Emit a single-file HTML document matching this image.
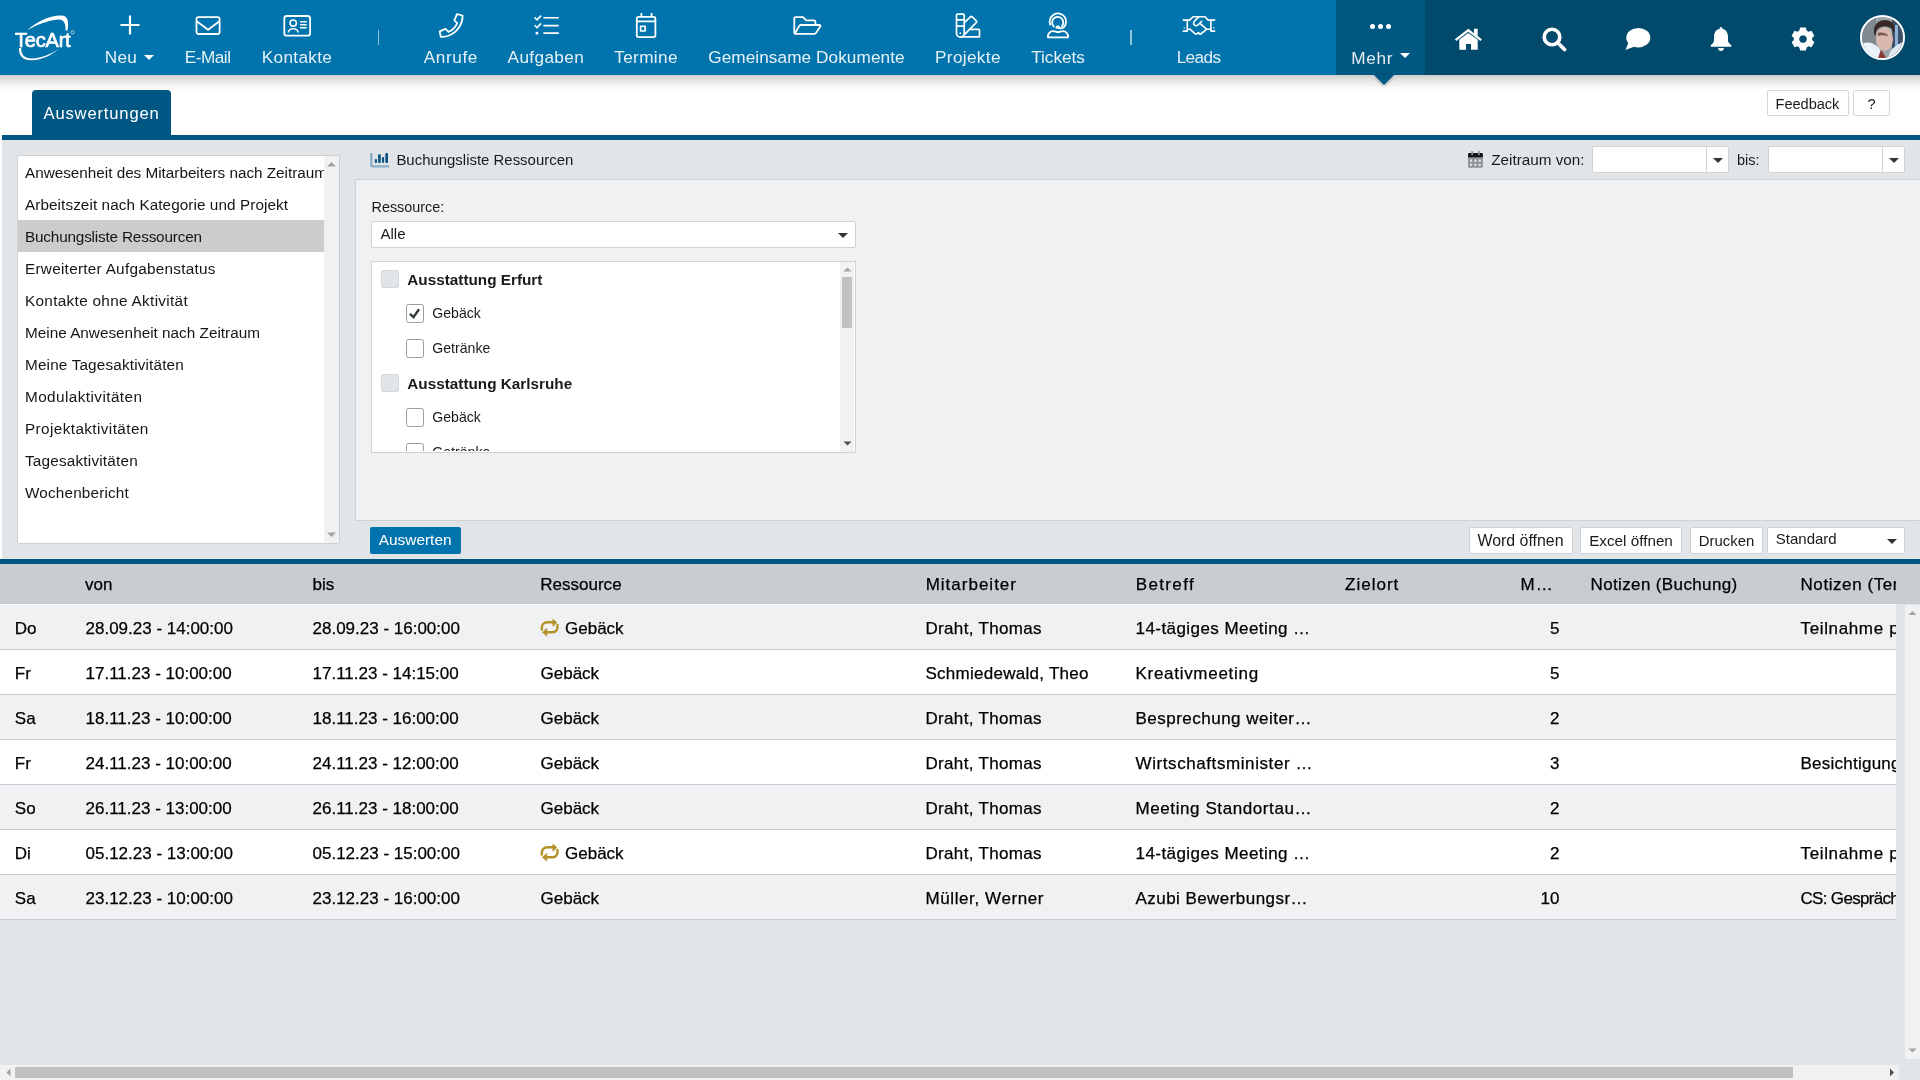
<!DOCTYPE html>
<html><head><meta charset="utf-8"><title>TecArt Auswertungen</title>
<style>
html,body{margin:0;padding:0}
body{width:1920px;height:1080px;overflow:hidden;position:relative;background:#fff;font-family:"Liberation Sans",sans-serif}
.a{position:absolute;box-sizing:border-box}
.t{position:absolute;white-space:nowrap;line-height:1.1172}
.k{-webkit-text-stroke:0.25px currentColor}
body{-webkit-font-smoothing:antialiased}
#root{position:absolute;left:0;top:0;width:1920px;height:1080px;will-change:transform}
.nl{color:#fff;line-height:1.1172;white-space:nowrap}
svg{display:block}
</style></head><body><div id="root">
<div class="a" style="left:0px;top:0px;width:1920px;height:75px;background:#0274ad"></div>
<div class="a" style="left:1336px;top:0px;width:89px;height:75px;background:#015883"></div>
<div class="a" style="left:1425px;top:0px;width:495px;height:75px;background:#024a6b"></div>
<div class="a" style="left:0px;top:75px;width:1920px;height:16px;background:linear-gradient(rgba(0,0,0,0.19),rgba(0,0,0,0.085) 40%,rgba(0,0,0,0.02) 80%,rgba(0,0,0,0))"></div>
<svg class="a" style="left:1364px;top:75px;filter:drop-shadow(0 1px 2px rgba(0,0,0,0.3))" width="40" height="20"><polygon points="10,0 30,0 20,10" fill="#015883"/></svg>
<svg class="a" style="left:10px;top:10px" width="70" height="55" viewBox="0 0 70 55">
<path d="M17 20.5 C 26 12, 40 5, 52 5.6 C 58 6, 59 12, 57.5 20.5 L 55.5 20.5 C 56 14, 54 9, 48 9.5 C 38 10.5, 26 15, 17 20.5 Z" fill="#fff"/>
<path d="M9 38 L 11.2 38 C 11 45, 15 48.5, 22 48.5 C 32 48, 42 44, 50 38 C 42 45, 32 50, 22 50.3 C 13 50.5, 8.5 46, 9 38 Z" fill="#fff"/>
<text x="5" y="36.8" font-family="Liberation Sans" font-weight="400" font-size="20" fill="#fff" stroke="#fff" stroke-width="0.7" letter-spacing="-0.2">TecArt</text>
<circle cx="62.6" cy="22.3" r="1.6" fill="none" stroke="#fff" stroke-width="0.6"/>
</svg>
<div class="a" style="left:109.6px;top:5px;width:40px;height:40px"><svg width="40" height="40" viewBox="0 0 40 40"><path d="M20 10.5V29.5M10.5 20H29.5" stroke="#fff" stroke-width="2.2" fill="none"/></svg></div>
<span class="t " style="left:104.8px;top:48.43px;font-size:17.2px;color:rgba(255,255,255,0.9);font-weight:400;letter-spacing:0.284px;">Neu</span>
<div class="a" style="left:144px;top:55px;width:0px;height:0px;border-left:5px solid transparent;border-right:5px solid transparent;border-top:5px solid #fff"></div>
<div class="a" style="left:188.2px;top:5px;width:40px;height:40px"><svg width="40" height="40" viewBox="0 0 40 40"><rect x="8.5" y="12.1" width="23.1" height="16.9" rx="2" stroke="#fff" stroke-width="1.8" fill="none"/><path d="M8.7 16.2 L20.1 24.8 L31.4 16.2" stroke="#fff" stroke-width="1.8" fill="none" stroke-linejoin="round"/></svg></div>
<span class="t " style="left:184.7px;top:48.43px;font-size:17.2px;color:rgba(255,255,255,0.9);font-weight:400;letter-spacing:-0.481px;">E-Mail</span>
<div class="a" style="left:277.1px;top:5px;width:40px;height:40px"><svg width="40" height="40" viewBox="0 0 40 40"><rect x="7.3" y="11" width="25.8" height="19.7" rx="2.5" stroke="#fff" stroke-width="1.8" fill="none"/><circle cx="16.2" cy="18.1" r="3.2" stroke="#fff" stroke-width="1.5" fill="none"/><path d="M11.3 27.6 C 11.3 25.3, 13.5 23.8, 16.2 23.8 C 18.9 23.8, 21.1 25.3, 21.1 27.6" stroke="#fff" stroke-width="1.6" fill="none"/><path d="M23.1 16.8H29.7M23.1 19.8H29.7M23.1 22.8H29.7" stroke="#fff" stroke-width="1.5"/></svg></div>
<span class="t " style="left:261.8px;top:48.43px;font-size:17.2px;color:rgba(255,255,255,0.9);font-weight:400;letter-spacing:0.322px;">Kontakte</span>
<div class="a" style="left:431.0px;top:5px;width:40px;height:40px"><svg width="40" height="40" viewBox="0 0 40 40"><path d="M26 9.1 L31.5 10.5 C 31.9 18, 27 27.5, 16.7 31 C 14.5 31.6, 12 31.9, 9.8 31.8 L8.7 26.4 L14.5 23.9 L17.5 26.9 C 21 25.5, 24.5 22, 26.3 18.1 L23.3 15.3 Z" stroke="#fff" stroke-width="1.8" fill="none" stroke-linejoin="round"/></svg></div>
<span class="t " style="left:423.8px;top:48.43px;font-size:17.2px;color:rgba(255,255,255,0.9);font-weight:400;letter-spacing:0.592px;">Anrufe</span>
<div class="a" style="left:526.0px;top:5px;width:40px;height:40px"><svg width="40" height="40" viewBox="0 0 40 40"><path d="M8.6 12.4 L11 14.9 L15.1 10.6 M8.6 20.2 L11 22.7 L15.1 18.4" stroke="#fff" stroke-width="1.6" fill="none"/><circle cx="10.9" cy="28.2" r="1.4" fill="#fff"/><path d="M17.4 12.8H32.8M17.4 20.6H32.8M17.4 28.1H32.8" stroke="#fff" stroke-width="1.6"/></svg></div>
<span class="t " style="left:507.59999999999997px;top:48.43px;font-size:17.2px;color:rgba(255,255,255,0.9);font-weight:400;letter-spacing:0.358px;">Aufgaben</span>
<div class="a" style="left:626.2px;top:5px;width:40px;height:40px"><svg width="40" height="40" viewBox="0 0 40 40"><rect x="10.8" y="11.9" width="18.6" height="20.2" rx="1.8" stroke="#fff" stroke-width="1.8" fill="none"/><path d="M10.8 16.3H29.4M15.4 8V12M25.6 8V12" stroke="#fff" stroke-width="1.8"/><rect x="14.6" y="21.3" width="4.5" height="4.6" stroke="#fff" stroke-width="1.6" fill="none"/></svg></div>
<span class="t " style="left:614.2px;top:48.43px;font-size:17.2px;color:rgba(255,255,255,0.9);font-weight:400;letter-spacing:0.360px;">Termine</span>
<div class="a" style="left:786.6px;top:5px;width:40px;height:40px"><svg width="40" height="40" viewBox="0 0 40 40"><g stroke="#fff" stroke-width="1.8" fill="none" stroke-linejoin="round"><path d="M7.9 28.6 C7.5 28.4 7.3 28 7.3 27.4 V13.6 C7.3 12.8 7.9 12.1 8.8 12.1 H16.1 L19.1 15.3 H26.8 C27.7 15.3 28.4 16 28.4 16.9 V20"/><path d="M7.8 28.7 L12.1 21.1 C12.4 20.4 13.1 20 13.9 20 H32.4 C33.3 20 33.7 20.8 33.3 21.6 L28.9 28 C28.5 28.6 27.8 28.9 27 28.9 H8.8 C8.3 28.9 8 28.8 7.8 28.7 Z"/></g></svg></div>
<span class="t " style="left:708.2px;top:48.43px;font-size:17.2px;color:rgba(255,255,255,0.9);font-weight:400;letter-spacing:0.079px;">Gemeinsame Dokumente</span>
<div class="a" style="left:948.1px;top:5px;width:40px;height:40px"><svg width="40" height="40" viewBox="0 0 40 40"><g stroke="#fff" stroke-width="1.7" fill="none" stroke-linejoin="round"><path d="M8.5 10.2 C8.5 9.5 9 9.1 9.6 9.1 H15.1 C15.7 9.1 16.2 9.5 16.2 10.2 V28.2 A3.85 3.85 0 0 1 8.5 28.2 Z"/><path d="M8.5 14.8 H16.2 M8.5 21.2 H16.2"/><path d="M16.4 17.6 L22.6 11.6 C23 11.2 23.6 11.2 24 11.6 L28.4 16 C28.8 16.4 28.8 17 28.4 17.4 L16.4 29.6"/><path d="M22.4 24.4 H30.5 C31.1 24.4 31.5 24.8 31.5 25.4 V30.9 C31.5 31.5 31.1 31.9 30.5 31.9 H12.3"/></g><circle cx="12.3" cy="28.2" r="0.85" fill="#fff"/></svg></div>
<span class="t " style="left:935.0px;top:48.43px;font-size:17.2px;color:rgba(255,255,255,0.9);font-weight:400;letter-spacing:0.348px;">Projekte</span>
<div class="a" style="left:1038.2px;top:5px;width:40px;height:40px"><svg width="40" height="40" viewBox="0 0 40 40"><path d="M12.2 19.6 A 8.2 8.2 0 1 1 25.5 22.6 C 24.5 23.3, 23.3 23.4, 21.5 23.4" stroke="#fff" stroke-width="1.8" fill="none" stroke-linecap="round"/><path d="M15.9 21.6 A 5.6 5.6 0 1 1 23.9 21.2" stroke="#fff" stroke-width="1.8" fill="none" stroke-linecap="round"/><rect x="17.6" y="20.6" width="4.4" height="3.2" rx="1.5" fill="#fff"/><path d="M9.9 32.4 C 9.6 28.5, 12.3 26.2, 15 26.2 C 17 26.2, 18.3 27.2, 20 27.2 C 21.7 27.2, 23 26.2, 25 26.2 C 27.7 26.2, 30.4 28.5, 30.1 32.4 Z" stroke="#fff" stroke-width="1.8" fill="none" stroke-linejoin="round"/></svg></div>
<span class="t " style="left:1031.2px;top:48.43px;font-size:17.2px;color:rgba(255,255,255,0.9);font-weight:400;letter-spacing:-0.016px;">Tickets</span>
<div class="a" style="left:1179.0px;top:5px;width:40px;height:40px"><svg width="40" height="40" viewBox="0 0 40 40"><g stroke="#fff" stroke-width="1.6" fill="none" stroke-linejoin="round" stroke-linecap="round"><path d="M4.3 15.1 H10.7 L14 11.8 H26 L29.1 15.1 H35.7"/><path d="M8.3 15.1 V26.1 H4.3 M31.9 15.1 V26.1 H35.7"/><path d="M19.3 12.4 L15.2 16.4 C14 17.8, 14.5 20.5, 16.8 20.7 C 17.8 20.8, 18.5 20.4, 19.2 19.7 L22.6 16.4"/><path d="M21.2 18.6 L27 23.6 C 27.2 23.9, 27.6 24.2, 28 24.2 H31.9"/><path d="M8.3 24.2 H10.9 L16 28.6 C16.8 29.2, 17.9 29.1, 18.6 28.3 L19.4 27.6 L20.5 28.9 C21 29.4, 21.6 29.4, 22 28.9 L23.8 27 H24.8 L27.4 24"/></g><rect x="4.6" y="22.2" width="1.3" height="1.4" fill="#fff" opacity="0.8"/><rect x="34.1" y="22.2" width="1.3" height="1.4" fill="#fff" opacity="0.8"/></svg></div>
<span class="t " style="left:1176.7px;top:48.43px;font-size:17.2px;color:rgba(255,255,255,0.9);font-weight:400;letter-spacing:-0.636px;">Leads</span>
<div class="a" style="left:378px;top:30px;width:1px;height:15px;background:rgba(255,255,255,0.58)"></div>
<div class="a" style="left:1130px;top:30px;width:2px;height:15px;background:rgba(255,255,255,0.58)"></div>
<div class="a" style="left:1369.9px;top:24px;width:5.2px;height:5.2px;border-radius:50%;background:#fff"></div>
<div class="a" style="left:1377.9px;top:24px;width:5.2px;height:5.2px;border-radius:50%;background:#fff"></div>
<div class="a" style="left:1385.9px;top:24px;width:5.2px;height:5.2px;border-radius:50%;background:#fff"></div>
<span class="t " style="left:1351.2px;top:48.63px;font-size:17.2px;color:rgba(255,255,255,0.9);font-weight:400;letter-spacing:0.676px;">Mehr</span>
<div class="a" style="left:1400px;top:53px;width:0px;height:0px;border-left:5px solid transparent;border-right:5px solid transparent;border-top:5px solid #fff"></div>
<svg class="a" style="left:1454px;top:28px" width="29" height="23" viewBox="0 0 29 23"><path d="M14.3 0.8 L0.8 11.2 L2.3 13 L14.3 3.8 L26.4 13 L27.9 11.2 L23.7 8 V0.7 H20 V5.2 Z" fill="#fff"/><path d="M5.3 11.8 L14.3 5 L23.7 11.8 V21.7 H17 V16 H12 V21.7 H5.3 Z" fill="#fff"/></svg>
<svg class="a" style="left:1541px;top:26px" width="26" height="26" viewBox="0 0 26 26"><circle cx="11" cy="11" r="7.8" stroke="#fff" stroke-width="3.6" fill="none"/><path d="M16.5 16.5 L23.5 23.5" stroke="#fff" stroke-width="3.8" stroke-linecap="round"/></svg>
<svg class="a" style="left:1625px;top:27px" width="26" height="24" viewBox="0 0 26 24"><ellipse cx="13.3" cy="10.7" rx="12" ry="9.7" fill="#fff"/><path d="M3.5 15.5 L0.5 23 L9.5 19.5 Z" fill="#fff"/></svg>
<svg class="a" style="left:1709px;top:26px" width="24" height="26" viewBox="0 0 24 26"><path d="M12 1 C 13 1, 13.3 1.8, 13.3 2.8 C 17 3.6, 19 6.8, 19 10.8 V 14.6 C 19 17, 21 18.3, 22.3 19.2 V 20.7 H 1.7 V 19.2 C 3 18.3, 5 17, 5 14.6 V 10.8 C 5 6.8, 7 3.6, 10.7 2.8 C 10.7 1.8, 11 1, 12 1 Z" fill="#fff"/><path d="M9.1 21.9 H14.9 C 14.9 23.6, 13.6 25, 12 25 C 10.4 25, 9.1 23.6, 9.1 21.9 Z" fill="#fff"/></svg>
<svg class="a" style="left:1791px;top:27px" width="24" height="24" viewBox="0 0 24 24"><path fill="#fff" fill-rule="evenodd" d="M8.40 3.53 L9.10 0.56 L14.90 0.56 L15.60 3.53 L17.53 4.65 L20.46 3.77 L23.36 8.79 L21.13 10.88 L21.13 13.12 L23.36 15.21 L20.46 20.23 L17.53 19.35 L15.60 20.47 L14.90 23.44 L9.10 23.44 L8.40 20.47 L6.47 19.35 L3.54 20.23 L0.64 15.21 L2.87 13.12 L2.87 10.88 L0.64 8.79 L3.54 3.77 L6.47 4.65 Z M12 8.2 A3.8 3.8 0 1 0 12.001 8.2 Z"/></svg>
<div class="a" style="left:1860px;top:15px;width:45px;height:45px;border:2px solid #fff;border-radius:50%;overflow:hidden;background:#c9d6e0">
<svg width="41" height="41" viewBox="0 0 41 41"><rect width="41" height="41" fill="#9aa6ae"/><rect x="0" y="0" width="14" height="30" fill="#7f8a90"/><rect x="30" y="0" width="11" height="41" fill="#3e5068"/><rect x="33" y="8" width="3" height="25" fill="#8fb0d8"/>
<path d="M0 27 C 6 24, 12 26, 17 31 L 22 41 H0 Z" fill="#e9f2f8"/><path d="M41 25 C 36 27, 31 30, 28 35 L 26 41 H41 Z" fill="#dfeaf3"/>
<ellipse cx="22.5" cy="22" rx="8.5" ry="11.5" fill="#d9b8ad"/>
<path d="M16 16 C 18 15, 22 16, 25 17 L 26 19 C 22 18, 18 18, 16 19 Z" fill="#7a5a55"/>
<path d="M12 17 C 11 7, 17 3, 23 3 C 30 3, 34 8, 32 16 C 30 11, 27 9, 22 9.5 C 17 10, 14 12, 13.5 19 Z" fill="#3a2826"/>
<path d="M19 33 C 21 36, 23 38, 24 41 H 16 C 17 38, 18 35, 19 33 Z" fill="#8a3a35"/></svg></div>
<div class="a" style="left:32px;top:90px;width:139px;height:45px;background:#015783;border-radius:4px 4px 0 0"></div>
<span class="t " style="left:43.5px;top:105.27px;font-size:16.6px;color:#fff;font-weight:400;letter-spacing:0.837px;">Auswertungen</span>
<div class="a" style="left:1767px;top:90px;width:82px;height:26px;background:#fff;border:1px solid #d4d7da;border-radius:2px"></div>
<span class="t " style="left:1775.5px;top:95.63px;font-size:14.55px;color:#1a1a1a;font-weight:400;">Feedback</span>
<div class="a" style="left:1853px;top:90px;width:37px;height:26px;background:#fff;border:1px solid #d4d7da;border-radius:2px"></div>
<span class="t " style="left:1867.5px;top:95.67px;font-size:14.5px;color:#1a1a1a;font-weight:400;">?</span>
<div class="a" style="left:2px;top:135px;width:1918px;height:5px;background:#015783"></div>
<div class="a" style="left:2px;top:140px;width:1918px;height:419px;background:#e1e5e8"></div>
<div class="a" style="left:17px;top:155px;width:323px;height:389px;background:#fff;border:1px solid #cdd1d4;border-radius:2px"></div>
<div class="a" style="left:324px;top:156px;width:15px;height:387px;background:#f1f1f1"></div>
<svg class="a" style="left:326px;top:160px" width="11" height="8"><polygon points="1,6.5 10,6.5 5.5,2" fill="#a3a3a3"/></svg>
<svg class="a" style="left:326px;top:531px" width="11" height="8"><polygon points="1,1.5 10,1.5 5.5,6" fill="#a3a3a3"/></svg>
<div class="a" style="left:18px;top:156px;width:306px;height:386px;overflow:hidden">
<span class="t " style="left:7.0px;top:7.85px;font-size:15.3px;color:#151515;font-weight:400;letter-spacing:-0.017px;">Anwesenheit des Mitarbeiters nach Zeitraum</span>
<span class="t " style="left:7.0px;top:39.85px;font-size:15.3px;color:#151515;font-weight:400;letter-spacing:0.076px;">Arbeitszeit nach Kategorie und Projekt</span>
<div class="a" style="left:0;top:64px;width:306px;height:32px;background:#cccccc"></div>
<span class="t " style="left:7.0px;top:71.85px;font-size:15.3px;color:#151515;font-weight:400;letter-spacing:-0.179px;">Buchungsliste Ressourcen</span>
<span class="t " style="left:7.0px;top:103.85px;font-size:15.3px;color:#151515;font-weight:400;letter-spacing:0.273px;">Erweiterter Aufgabenstatus</span>
<span class="t " style="left:7.0px;top:135.85px;font-size:15.3px;color:#151515;font-weight:400;letter-spacing:0.322px;">Kontakte ohne Aktivität</span>
<span class="t " style="left:7.0px;top:167.85px;font-size:15.3px;color:#151515;font-weight:400;letter-spacing:0.010px;">Meine Anwesenheit nach Zeitraum</span>
<span class="t " style="left:7.0px;top:199.85px;font-size:15.3px;color:#151515;font-weight:400;letter-spacing:0.165px;">Meine Tagesaktivitäten</span>
<span class="t " style="left:7.0px;top:231.85px;font-size:15.3px;color:#151515;font-weight:400;letter-spacing:0.430px;">Modulaktivitäten</span>
<span class="t " style="left:7.0px;top:263.85px;font-size:15.3px;color:#151515;font-weight:400;letter-spacing:0.401px;">Projektaktivitäten</span>
<span class="t " style="left:7.0px;top:295.85px;font-size:15.3px;color:#151515;font-weight:400;letter-spacing:0.200px;">Tagesaktivitäten</span>
<span class="t " style="left:7.0px;top:327.85px;font-size:15.3px;color:#151515;font-weight:400;letter-spacing:0.170px;">Wochenbericht</span>
</div>
<svg class="a" style="left:370px;top:153px" width="20" height="16" viewBox="0 0 20 16"><path d="M1.3 0.8 V12.2 C1.3 13 1.7 13.4 2.5 13.4 H18.2" stroke="#8aacc4" stroke-width="2.3" fill="none" stroke-linecap="round"/><g fill="#0a5282"><rect x="4.8" y="6.1" width="2.2" height="3.8" rx="0.9"/><rect x="8.1" y="1.2" width="2.7" height="8.7" rx="1"/><rect x="12" y="3.9" width="2.1" height="6" rx="0.9"/><rect x="15.3" y="0.1" width="2.7" height="9.8" rx="1"/></g></svg>
<span class="t " style="left:396.4px;top:151.77px;font-size:14.95px;color:#1a1a1a;font-weight:400;">Buchungsliste Ressourcen</span>
<svg class="a" style="left:1467px;top:151px" width="17" height="18" viewBox="0 0 17 18"><rect x="1.1" y="2" width="14.7" height="14.8" rx="1.3" fill="#8e9296"/><path d="M1.1 6.2 V3.3 C1.1 2.6 1.7 2 2.4 2 H14.5 C15.2 2 15.8 2.6 15.8 3.3 V6.2 Z" fill="#111"/><rect x="4.3" y="0" width="1.8" height="4.2" fill="#8e9296"/><rect x="10.9" y="0" width="1.8" height="4.2" fill="#8e9296"/><g fill="#e1e5e8"><rect x="3" y="8.5" width="2.1" height="2.3"/><rect x="7.3" y="8.5" width="2.2" height="2.3"/><rect x="11.6" y="8.5" width="2.2" height="2.3"/><rect x="3" y="12.7" width="2.1" height="2.3"/><rect x="7.3" y="12.7" width="2.2" height="2.3"/><rect x="11.6" y="12.7" width="2.2" height="2.3"/></g></svg>
<span class="t " style="left:1491.3px;top:151.19px;font-size:15.25px;color:#1a1a1a;font-weight:400;">Zeitraum von:</span>
<div class="a" style="left:1592px;top:146px;width:115px;height:27px;background:#fff;border:1px solid #cfd3d6;border-radius:2px 0 0 2px"></div><div class="a" style="left:1707px;top:146px;width:22px;height:27px;background:#fff;border:1px solid #cfd3d6;border-left:none;border-radius:0 2px 2px 0"></div><div class="a" style="left:1713.0px;top:158px;width:0px;height:0px;border-left:5px solid transparent;border-right:5px solid transparent;border-top:5px solid #333"></div>
<span class="t " style="left:1737px;top:151.87px;font-size:14.5px;color:#1a1a1a;font-weight:400;">bis:</span>
<div class="a" style="left:1768px;top:146px;width:115px;height:27px;background:#fff;border:1px solid #cfd3d6;border-radius:2px 0 0 2px"></div><div class="a" style="left:1883px;top:146px;width:22px;height:27px;background:#fff;border:1px solid #cfd3d6;border-left:none;border-radius:0 2px 2px 0"></div><div class="a" style="left:1889.0px;top:158px;width:0px;height:0px;border-left:5px solid transparent;border-right:5px solid transparent;border-top:5px solid #333"></div>
<div class="a" style="left:355px;top:179px;width:1565px;height:1px;background:#cfd3d6"></div>
<div class="a" style="left:355px;top:179px;width:1565px;height:342px;background:#eff1f3;border-left:1px solid #cfd3d6;border-bottom:1px solid #cfd3d6;box-sizing:border-box"></div>
<div class="a" style="left:355px;top:179px;width:1565px;height:1px;background:#cfd3d6"></div>
<span class="t " style="left:371.5px;top:198.86px;font-size:14.4px;color:#1a1a1a;font-weight:400;">Ressource:</span>
<div class="a" style="left:371px;top:221px;width:485px;height:27px;background:#fff;border:1px solid #cfd3d6;border-radius:2px"></div>
<span class="t " style="left:380.4px;top:226.33px;font-size:15.1px;color:#1a1a1a;font-weight:400;">Alle</span>
<div class="a" style="left:838px;top:233px;width:0px;height:0px;border-left:5px solid transparent;border-right:5px solid transparent;border-top:5px solid #333"></div>
<div class="a" style="left:371px;top:261px;width:485px;height:192px;background:#fff;border:1px solid #cfd3d6"></div>
<div class="a" style="left:840px;top:262px;width:14px;height:190px;background:#f1f1f1"></div>
<div class="a" style="left:842px;top:277px;width:10px;height:51px;background:#c1c1c1"></div>
<svg class="a" style="left:842px;top:265px" width="11" height="8"><polygon points="1.5,6.5 9.5,6.5 5.5,2.5" fill="#a3a3a3"/></svg>
<svg class="a" style="left:842px;top:440px" width="11" height="8"><polygon points="1.5,1.5 9.5,1.5 5.5,5.5" fill="#505050"/></svg>
<div class="a" style="left:372px;top:262px;width:468px;height:189px;overflow:hidden">
<div class="a" style="left:9px;top:7.800000000000011px;width:18px;height:18px;background:#e1e5e8;border:1px solid #d3d7da;border-radius:2px"></div>
<span class="t " style="left:35.3px;top:9.25px;font-size:15.3px;color:#1a1a1a;font-weight:700;">Ausstattung Erfurt</span>
<div class="a" style="left:34px;top:42.400000000000034px;width:18px;height:19px;background:#fff;border:1px solid #989ea2;border-radius:2.5px"></div>
<svg class="a" style="left:36px;top:45.400000000000034px" width="14" height="14" viewBox="0 0 14 14"><path d="M2 6.8 L5.5 10.2 L11 2.3" stroke="#343c40" stroke-width="2.4" fill="none"/></svg>
<span class="t " style="left:60.3px;top:44.44px;font-size:14.1px;color:#1a1a1a;font-weight:400;">Gebäck</span>
<div class="a" style="left:34px;top:77.0px;width:18px;height:19px;background:#fff;border:1px solid #989ea2;border-radius:2.5px"></div>
<span class="t " style="left:60.3px;top:79.04px;font-size:14.1px;color:#1a1a1a;font-weight:400;">Getränke</span>
<div class="a" style="left:9px;top:111.60000000000002px;width:18px;height:18px;background:#e1e5e8;border:1px solid #d3d7da;border-radius:2px"></div>
<span class="t " style="left:35.3px;top:113.05px;font-size:15.3px;color:#1a1a1a;font-weight:700;">Ausstattung Karlsruhe</span>
<div class="a" style="left:34px;top:146.20000000000005px;width:18px;height:19px;background:#fff;border:1px solid #989ea2;border-radius:2.5px"></div>
<span class="t " style="left:60.3px;top:148.24px;font-size:14.1px;color:#1a1a1a;font-weight:400;">Gebäck</span>
<div class="a" style="left:34px;top:180.8px;width:18px;height:19px;background:#fff;border:1px solid #989ea2;border-radius:2.5px"></div>
<span class="t " style="left:60.3px;top:182.84px;font-size:14.1px;color:#1a1a1a;font-weight:400;">Getränke</span>
</div>
<div class="a" style="left:370px;top:527px;width:91px;height:27px;background:#0274ad;border-radius:2px"></div>
<span class="t " style="left:378.8px;top:531.36px;font-size:15.4px;color:#fff;font-weight:400;">Auswerten</span>
<div class="a" style="left:1469px;top:527px;width:104px;height:27px;background:#fff;border:1px solid #cfd3d6;border-radius:2px"></div><span class="t " style="left:1477.5px;top:531.81px;font-size:15.9px;color:#1a1a1a;font-weight:400;">Word öffnen</span>
<div class="a" style="left:1580px;top:527px;width:102px;height:27px;background:#fff;border:1px solid #cfd3d6;border-radius:2px"></div><span class="t " style="left:1589.2px;top:532.39px;font-size:15.25px;color:#1a1a1a;font-weight:400;">Excel öffnen</span>
<div class="a" style="left:1690px;top:527px;width:73px;height:27px;background:#fff;border:1px solid #cfd3d6;border-radius:2px"></div><span class="t " style="left:1698.8px;top:532.71px;font-size:14.9px;color:#1a1a1a;font-weight:400;">Drucken</span>
<div class="a" style="left:1767px;top:527px;width:138px;height:27px;background:#fff;border:1px solid #cfd3d6;border-radius:2px"></div><span class="t " style="left:0px;top:532.62px;font-size:15px;color:#1a1a1a;font-weight:400;"></span>
<span class="t " style="left:1775.8px;top:531.42px;font-size:15.0px;color:#1a1a1a;font-weight:400;">Standard</span>
<div class="a" style="left:1887px;top:539px;width:0px;height:0px;border-left:5px solid transparent;border-right:5px solid transparent;border-top:5px solid #333"></div>
<div class="a" style="left:0px;top:559px;width:1920px;height:5px;background:#015783"></div>
<div class="a" style="left:0px;top:564px;width:1920px;height:40px;background:#c8cdd1"></div>
<div class="a" style="left:0px;top:604px;width:1920px;height:476px;background:#e1e5e8"></div>
<div class="a" style="left:0px;top:604px;width:1896px;height:1px;background:#fff"></div>
<span class="t k" style="left:85px;top:575.01px;font-size:17px;color:#000;font-weight:400;">von</span>
<span class="t k" style="left:312.5px;top:575.01px;font-size:17px;color:#000;font-weight:400;">bis</span>
<span class="t k" style="left:540.2px;top:575.01px;font-size:17px;color:#000;font-weight:400;letter-spacing:0.017px;">Ressource</span>
<span class="t k" style="left:925.7px;top:575.01px;font-size:17px;color:#000;font-weight:400;letter-spacing:0.999px;">Mitarbeiter</span>
<span class="t k" style="left:1135.7px;top:575.01px;font-size:17px;color:#000;font-weight:400;letter-spacing:1.370px;">Betreff</span>
<span class="t k" style="left:1345px;top:575.01px;font-size:17px;color:#000;font-weight:400;letter-spacing:1.011px;">Zielort</span>
<span class="t k" style="left:1520.5px;top:575.01px;font-size:17px;color:#000;font-weight:400;letter-spacing:1.028px;">M…</span>
<span class="t k" style="left:1590.5px;top:575.01px;font-size:17px;color:#000;font-weight:400;letter-spacing:0.371px;">Notizen (Buchung)</span>
<div class="a" style="left:1800px;top:564px;width:96px;height:40px;overflow:hidden"><span class="t k" style="left:0.5px;top:11.01px;font-size:17px;color:#000;font-weight:400;letter-spacing:0.578px;">Notizen (Termin)</span></div>
<div class="a" style="left:0px;top:605px;width:1896px;height:44px;background:#eff1f3"></div>
<div class="a" style="left:0px;top:649px;width:1896px;height:1px;background:#c9cdd1"></div>
<span class="t k" style="left:14.8px;top:618.81px;font-size:17px;color:#000;font-weight:400;">Do</span>
<span class="t k" style="left:85.5px;top:618.81px;font-size:17px;color:#000;font-weight:400;">28.09.23 - 14:00:00</span>
<span class="t k" style="left:312.5px;top:618.81px;font-size:17px;color:#000;font-weight:400;">28.09.23 - 16:00:00</span>
<div class="a" style="left:540px;top:618px;width:20px;height:20px"><svg width="20" height="20" viewBox="0 0 20 20"><g stroke="#b4922a" stroke-width="2.5" fill="none" stroke-linecap="round"><path d="M1.8 11.6 C 1.3 7.3, 3.2 4.3, 7 4.3 H 13.5"/><path d="M17.5 6.9 C 18 11.2, 16.2 14.3, 12.5 14.3 H 6"/></g><path d="M12.9 1 L16.9 4.6 L12.9 8.4 Z" fill="#b4922a" stroke="#b4922a" stroke-width="0.6" stroke-linejoin="round"/><path d="M6.8 10.2 L2.4 14.3 L6.8 18.2 Z" fill="#b4922a" stroke="#b4922a" stroke-width="0.6" stroke-linejoin="round"/></svg></div>
<span class="t k" style="left:565px;top:618.81px;font-size:17px;color:#000;font-weight:400;">Gebäck</span>
<span class="t k" style="left:925.5px;top:618.81px;font-size:17px;color:#000;font-weight:400;letter-spacing:0.323px;">Draht, Thomas</span>
<span class="t k" style="left:1135.5px;top:618.81px;font-size:17px;color:#000;font-weight:400;letter-spacing:0.435px;">14-tägiges Meeting …</span>
<span class="t k" style="left:1460px;width:99.5px;text-align:right;top:618.81px;font-size:17px;color:#000">5</span>
<div class="a" style="left:1800px;top:605px;width:96px;height:44px;overflow:hidden"><span class="t k" style="left:0.5px;top:13.81px;font-size:17px;color:#000;font-weight:400;letter-spacing:0.642px;">Teilnahme persönlich</span></div>
<div class="a" style="left:0px;top:650px;width:1896px;height:44px;background:#fff"></div>
<div class="a" style="left:0px;top:694px;width:1896px;height:1px;background:#c9cdd1"></div>
<span class="t k" style="left:14.8px;top:663.81px;font-size:17px;color:#000;font-weight:400;">Fr</span>
<span class="t k" style="left:85.5px;top:663.81px;font-size:17px;color:#000;font-weight:400;">17.11.23 - 10:00:00</span>
<span class="t k" style="left:312.5px;top:663.81px;font-size:17px;color:#000;font-weight:400;">17.11.23 - 14:15:00</span>
<span class="t k" style="left:540.5px;top:663.81px;font-size:17px;color:#000;font-weight:400;">Gebäck</span>
<span class="t k" style="left:925.5px;top:663.81px;font-size:17px;color:#000;font-weight:400;letter-spacing:0.267px;">Schmiedewald, Theo</span>
<span class="t k" style="left:1135.5px;top:663.81px;font-size:17px;color:#000;font-weight:400;letter-spacing:0.708px;">Kreativmeeting</span>
<span class="t k" style="left:1460px;width:99.5px;text-align:right;top:663.81px;font-size:17px;color:#000">5</span>
<div class="a" style="left:0px;top:695px;width:1896px;height:44px;background:#eff1f3"></div>
<div class="a" style="left:0px;top:739px;width:1896px;height:1px;background:#c9cdd1"></div>
<span class="t k" style="left:14.8px;top:708.81px;font-size:17px;color:#000;font-weight:400;">Sa</span>
<span class="t k" style="left:85.5px;top:708.81px;font-size:17px;color:#000;font-weight:400;">18.11.23 - 10:00:00</span>
<span class="t k" style="left:312.5px;top:708.81px;font-size:17px;color:#000;font-weight:400;">18.11.23 - 16:00:00</span>
<span class="t k" style="left:540.5px;top:708.81px;font-size:17px;color:#000;font-weight:400;">Gebäck</span>
<span class="t k" style="left:925.5px;top:708.81px;font-size:17px;color:#000;font-weight:400;letter-spacing:0.323px;">Draht, Thomas</span>
<span class="t k" style="left:1135.5px;top:708.81px;font-size:17px;color:#000;font-weight:400;letter-spacing:0.485px;">Besprechung weiter…</span>
<span class="t k" style="left:1460px;width:99.5px;text-align:right;top:708.81px;font-size:17px;color:#000">2</span>
<div class="a" style="left:0px;top:740px;width:1896px;height:44px;background:#fff"></div>
<div class="a" style="left:0px;top:784px;width:1896px;height:1px;background:#c9cdd1"></div>
<span class="t k" style="left:14.8px;top:753.81px;font-size:17px;color:#000;font-weight:400;">Fr</span>
<span class="t k" style="left:85.5px;top:753.81px;font-size:17px;color:#000;font-weight:400;">24.11.23 - 10:00:00</span>
<span class="t k" style="left:312.5px;top:753.81px;font-size:17px;color:#000;font-weight:400;">24.11.23 - 12:00:00</span>
<span class="t k" style="left:540.5px;top:753.81px;font-size:17px;color:#000;font-weight:400;">Gebäck</span>
<span class="t k" style="left:925.5px;top:753.81px;font-size:17px;color:#000;font-weight:400;letter-spacing:0.323px;">Draht, Thomas</span>
<span class="t k" style="left:1135.5px;top:753.81px;font-size:17px;color:#000;font-weight:400;letter-spacing:0.585px;">Wirtschaftsminister …</span>
<span class="t k" style="left:1460px;width:99.5px;text-align:right;top:753.81px;font-size:17px;color:#000">3</span>
<div class="a" style="left:1800px;top:740px;width:96px;height:44px;overflow:hidden"><span class="t k" style="left:0.5px;top:13.81px;font-size:17px;color:#000;font-weight:400;letter-spacing:0.241px;">Besichtigung</span></div>
<div class="a" style="left:0px;top:785px;width:1896px;height:44px;background:#eff1f3"></div>
<div class="a" style="left:0px;top:829px;width:1896px;height:1px;background:#c9cdd1"></div>
<span class="t k" style="left:14.8px;top:798.81px;font-size:17px;color:#000;font-weight:400;">So</span>
<span class="t k" style="left:85.5px;top:798.81px;font-size:17px;color:#000;font-weight:400;">26.11.23 - 13:00:00</span>
<span class="t k" style="left:312.5px;top:798.81px;font-size:17px;color:#000;font-weight:400;">26.11.23 - 18:00:00</span>
<span class="t k" style="left:540.5px;top:798.81px;font-size:17px;color:#000;font-weight:400;">Gebäck</span>
<span class="t k" style="left:925.5px;top:798.81px;font-size:17px;color:#000;font-weight:400;letter-spacing:0.323px;">Draht, Thomas</span>
<span class="t k" style="left:1135.5px;top:798.81px;font-size:17px;color:#000;font-weight:400;letter-spacing:0.589px;">Meeting Standortau…</span>
<span class="t k" style="left:1460px;width:99.5px;text-align:right;top:798.81px;font-size:17px;color:#000">2</span>
<div class="a" style="left:0px;top:830px;width:1896px;height:44px;background:#fff"></div>
<div class="a" style="left:0px;top:874px;width:1896px;height:1px;background:#c9cdd1"></div>
<span class="t k" style="left:14.8px;top:843.81px;font-size:17px;color:#000;font-weight:400;">Di</span>
<span class="t k" style="left:85.5px;top:843.81px;font-size:17px;color:#000;font-weight:400;">05.12.23 - 13:00:00</span>
<span class="t k" style="left:312.5px;top:843.81px;font-size:17px;color:#000;font-weight:400;">05.12.23 - 15:00:00</span>
<div class="a" style="left:540px;top:843px;width:20px;height:20px"><svg width="20" height="20" viewBox="0 0 20 20"><g stroke="#b4922a" stroke-width="2.5" fill="none" stroke-linecap="round"><path d="M1.8 11.6 C 1.3 7.3, 3.2 4.3, 7 4.3 H 13.5"/><path d="M17.5 6.9 C 18 11.2, 16.2 14.3, 12.5 14.3 H 6"/></g><path d="M12.9 1 L16.9 4.6 L12.9 8.4 Z" fill="#b4922a" stroke="#b4922a" stroke-width="0.6" stroke-linejoin="round"/><path d="M6.8 10.2 L2.4 14.3 L6.8 18.2 Z" fill="#b4922a" stroke="#b4922a" stroke-width="0.6" stroke-linejoin="round"/></svg></div>
<span class="t k" style="left:565px;top:843.81px;font-size:17px;color:#000;font-weight:400;">Gebäck</span>
<span class="t k" style="left:925.5px;top:843.81px;font-size:17px;color:#000;font-weight:400;letter-spacing:0.323px;">Draht, Thomas</span>
<span class="t k" style="left:1135.5px;top:843.81px;font-size:17px;color:#000;font-weight:400;letter-spacing:0.435px;">14-tägiges Meeting …</span>
<span class="t k" style="left:1460px;width:99.5px;text-align:right;top:843.81px;font-size:17px;color:#000">2</span>
<div class="a" style="left:1800px;top:830px;width:96px;height:44px;overflow:hidden"><span class="t k" style="left:0.5px;top:13.81px;font-size:17px;color:#000;font-weight:400;letter-spacing:0.642px;">Teilnahme persönlich</span></div>
<div class="a" style="left:0px;top:875px;width:1896px;height:44px;background:#eff1f3"></div>
<div class="a" style="left:0px;top:919px;width:1896px;height:1px;background:#c9cdd1"></div>
<span class="t k" style="left:14.8px;top:888.81px;font-size:17px;color:#000;font-weight:400;">Sa</span>
<span class="t k" style="left:85.5px;top:888.81px;font-size:17px;color:#000;font-weight:400;">23.12.23 - 10:00:00</span>
<span class="t k" style="left:312.5px;top:888.81px;font-size:17px;color:#000;font-weight:400;">23.12.23 - 16:00:00</span>
<span class="t k" style="left:540.5px;top:888.81px;font-size:17px;color:#000;font-weight:400;">Gebäck</span>
<span class="t k" style="left:925.5px;top:888.81px;font-size:17px;color:#000;font-weight:400;letter-spacing:0.599px;">Müller, Werner</span>
<span class="t k" style="left:1135.5px;top:888.81px;font-size:17px;color:#000;font-weight:400;letter-spacing:0.446px;">Azubi Bewerbungsr…</span>
<span class="t k" style="left:1460px;width:99.5px;text-align:right;top:888.81px;font-size:17px;color:#000">10</span>
<div class="a" style="left:1800px;top:875px;width:96px;height:44px;overflow:hidden"><span class="t k" style="left:0.5px;top:13.81px;font-size:17px;color:#000;font-weight:400;letter-spacing:-0.681px;">CS: Gespräch</span></div>
<div class="a" style="left:1905px;top:605px;width:15px;height:454px;background:#f1f1f1"></div>
<svg class="a" style="left:1907px;top:608px" width="11" height="9"><polygon points="1.5,7 9.5,7 5.5,3" fill="#a3a3a3"/></svg>
<svg class="a" style="left:1907px;top:1047px" width="11" height="9"><polygon points="1.5,1.5 9.5,1.5 5.5,5.5" fill="#a3a3a3"/></svg>
<div class="a" style="left:0px;top:1065px;width:1899px;height:15px;background:#f1f1f1"></div>
<div class="a" style="left:15px;top:1067px;width:1778px;height:11px;background:#c1c1c1"></div>
<svg class="a" style="left:3px;top:1067px" width="9" height="12"><polygon points="7.5,1.5 7.5,9.5 3.5,5.5" fill="#a3a3a3"/></svg>
<svg class="a" style="left:1887px;top:1067px" width="9" height="12"><polygon points="3,1.5 3,9.5 7,5.5" fill="#505050"/></svg>
</div></body></html>
